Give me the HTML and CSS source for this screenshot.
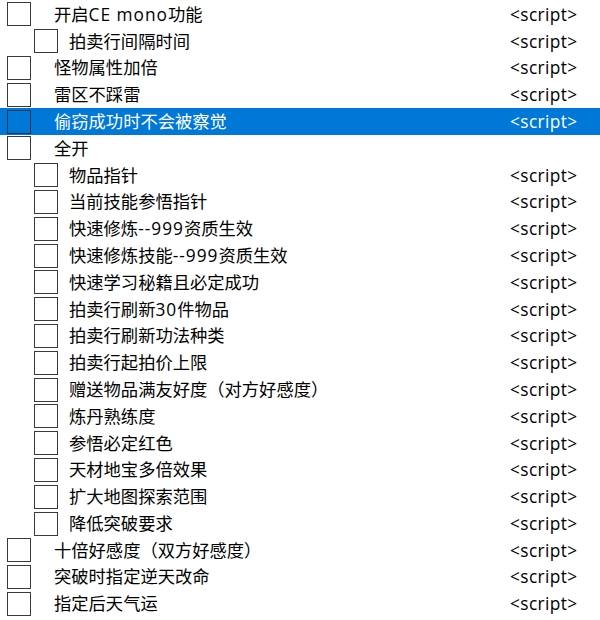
FILE: index.html
```html
<!DOCTYPE html>
<html lang="zh-CN">
<head>
<meta charset="utf-8">
<link rel="stylesheet" href="styles.css">
</head>
<body>
<div class="list">
  <div class="row"><span class="check"></span><span class="name">开启<span class="lat">CE mono</span>功能</span><span class="value">&lt;script&gt;</span></div>
  <div class="row child"><span class="check"></span><span class="name">拍卖行间隔时间</span><span class="value">&lt;script&gt;</span></div>
  <div class="row"><span class="check"></span><span class="name">怪物属性加倍</span><span class="value">&lt;script&gt;</span></div>
  <div class="row"><span class="check"></span><span class="name">雷区不踩雷</span><span class="value">&lt;script&gt;</span></div>
  <div class="row selected"><span class="check"></span><span class="name">偷窃成功时不会被察觉</span><span class="value">&lt;script&gt;</span></div>
  <div class="row"><span class="check"></span><span class="name">全开</span><span class="value"></span></div>
  <div class="row child"><span class="check"></span><span class="name">物品指针</span><span class="value">&lt;script&gt;</span></div>
  <div class="row child"><span class="check"></span><span class="name">当前技能参悟指针</span><span class="value">&lt;script&gt;</span></div>
  <div class="row child"><span class="check"></span><span class="name">快速修炼<span class="lat">--999</span>资质生效</span><span class="value">&lt;script&gt;</span></div>
  <div class="row child"><span class="check"></span><span class="name">快速修炼技能<span class="lat">--999</span>资质生效</span><span class="value">&lt;script&gt;</span></div>
  <div class="row child"><span class="check"></span><span class="name">快速学习秘籍且必定成功</span><span class="value">&lt;script&gt;</span></div>
  <div class="row child"><span class="check"></span><span class="name">拍卖行刷新<span class="lat">30</span>件物品</span><span class="value">&lt;script&gt;</span></div>
  <div class="row child"><span class="check"></span><span class="name">拍卖行刷新功法种类</span><span class="value">&lt;script&gt;</span></div>
  <div class="row child"><span class="check"></span><span class="name">拍卖行起拍价上限</span><span class="value">&lt;script&gt;</span></div>
  <div class="row child"><span class="check"></span><span class="name">赠送物品满友好度（对方好感度）</span><span class="value">&lt;script&gt;</span></div>
  <div class="row child"><span class="check"></span><span class="name">炼丹熟练度</span><span class="value">&lt;script&gt;</span></div>
  <div class="row child"><span class="check"></span><span class="name">参悟必定红色</span><span class="value">&lt;script&gt;</span></div>
  <div class="row child"><span class="check"></span><span class="name">天材地宝多倍效果</span><span class="value">&lt;script&gt;</span></div>
  <div class="row child"><span class="check"></span><span class="name">扩大地图探索范围</span><span class="value">&lt;script&gt;</span></div>
  <div class="row child"><span class="check"></span><span class="name">降低突破要求</span><span class="value">&lt;script&gt;</span></div>
  <div class="row"><span class="check"></span><span class="name">十倍好感度（双方好感度）</span><span class="value">&lt;script&gt;</span></div>
  <div class="row"><span class="check"></span><span class="name">突破时指定逆天改命</span><span class="value">&lt;script&gt;</span></div>
  <div class="row"><span class="check"></span><span class="name">指定后天气运</span><span class="value">&lt;script&gt;</span></div>
</div>
</body>
</html>
```
FILE: styles.css
```css
html, body {
  margin: 0;
  padding: 0;
  background: #ffffff;
}
body {
  font-family: "Open Sans", "Noto Sans CJK SC", sans-serif;
  font-size: 17.3px;
  color: #000000;
}
.list {
  padding-top: 1px;
  display: flex;
  flex-direction: column;
}
.row {
  display: flex;
  align-items: center;
  height: 26.8px;
  white-space: nowrap;
}
.check {
  flex: none;
  width: 24px;
  height: 24px;
  box-sizing: border-box;
  border: 1px solid #3a3a3a;
  background: #ffffff;
  margin-left: 7px;
}
.name {
  flex: 1;
  margin-left: 23px;
  line-height: 1;
}
.lat {
  letter-spacing: 1px;
}
.child .check {
  margin-left: 34px;
}
.child .name {
  margin-left: 11px;
}
.value {
  flex: none;
  width: 90px;
  line-height: 1;
  letter-spacing: 0.4px;
}
.selected {
  background: #0078d7;
  color: #ffffff;
}
.selected .check {
  background: #0078d7;
  border-color: #1b3550;
}
```
